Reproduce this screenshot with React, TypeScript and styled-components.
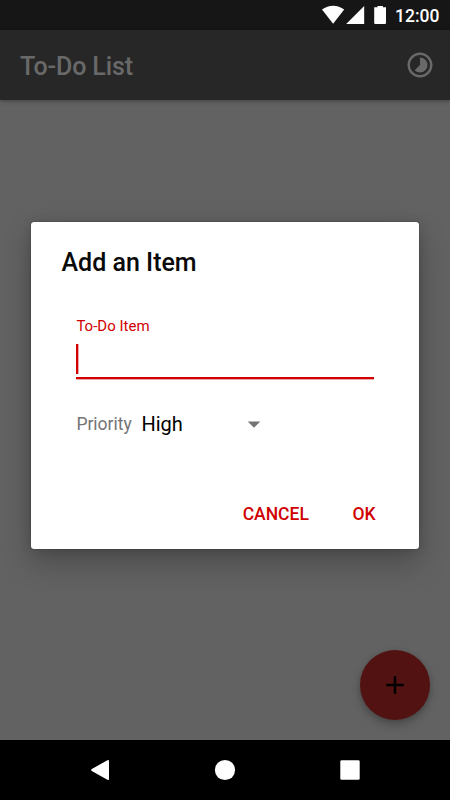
import React from "react";
import styled, { createGlobalStyle } from "styled-components";

const GlobalStyle = createGlobalStyle`
  *, *::before, *::after { box-sizing: border-box; }
  body { margin: 0; font-family: Roboto, sans-serif; background: #000; }
  button { font-family: inherit; border: 0; padding: 0; background: none; }
`;

const accent = "#d00000";

const Screen = styled.div`
  position: relative;
  display: flex;
  flex-direction: column;
  width: 450px;
  height: 800px;
  overflow: hidden;
  background: #626262;
`;

const StatusBar = styled.header`
  display: flex;
  align-items: center;
  justify-content: flex-end;
  height: 30px;
  padding: 1px 10px 0 0;
  background: #161616;
  color: #fff;
`;

const StatusIcons = styled.svg`
  width: 66px;
  height: 30px;
  margin: -1px 8px 0 0;
`;

const Clock = styled.span`
  width: 45px;
  font-size: 17.5px;
  font-weight: 500;
  line-height: 30px;
  white-space: nowrap;
`;

const Toolbar = styled.div`
  display: flex;
  align-items: center;
  justify-content: space-between;
  height: 70px;
  padding: 0 15px 0 20px;
  background: #272727;
  color: #696969;
  box-shadow: 0 1px 4px rgba(0, 0, 0, 0.35);
`;

const ToolbarTitle = styled.h1`
  margin: 3px 0 0;
  font-size: 25px;
  font-weight: 500;
  letter-spacing: -0.1px;
  line-height: 30px;
`;

const Icon = styled.svg`
  display: block;
  width: 30px;
  height: 30px;
  fill: currentColor;
`;

const Content = styled.main`
  display: flex;
  flex: 1;
  align-items: flex-end;
  justify-content: flex-end;
  padding: 20px;
`;

const Fab = styled.button`
  display: flex;
  align-items: center;
  justify-content: center;
  width: 70px;
  height: 70px;
  border-radius: 50%;
  background: #531212;
  color: #000;
  box-shadow: 0 5px 10px rgba(0, 0, 0, 0.22), 0 1px 5px rgba(0, 0, 0, 0.12);
`;

const NavBar = styled.nav`
  display: flex;
  align-items: center;
  justify-content: space-between;
  height: 60px;
  padding: 0 85px;
  background: #000;
  color: #fff;
`;

const Dialog = styled.section`
  position: absolute;
  top: 221.5px;
  left: 31px;
  display: flex;
  flex-direction: column;
  width: 388px;
  height: 327px;
  padding: 25px 28px 15px 30.5px;
  border-radius: 3px;
  background: #fff;
  box-shadow: 0 14px 30px rgba(0, 0, 0, 0.24), 0 1px 12px rgba(0, 0, 0, 0.14), 0 0 1px rgba(0, 0, 0, 0.8);
`;

const DialogTitle = styled.h2`
  margin: 0;
  color: #0a0a0a;
  font-size: 25px;
  font-weight: 500;
  line-height: 32px;
`;

const Form = styled.div`
  flex: 1;
  padding: 38.5px 17.5px 0 14.9px;
`;

const Field = styled.div`
  height: 62px;
  border-bottom: 2px solid ${accent};
  box-shadow: 0 1px 0 rgba(208, 0, 0, 0.35);
`;

const FieldLabel = styled.div`
  color: ${accent};
  font-size: 15px;
  line-height: 19px;
`;

const Caret = styled.div`
  width: 2px;
  height: 30px;
  margin-top: 8px;
  background: ${accent};
  box-shadow: 1px 0 0 rgba(208, 0, 0, 0.35);
`;

const PriorityRow = styled.div`
  display: flex;
  align-items: center;
  height: 40px;
  margin-top: 24.5px;
`;

const PriorityLabel = styled.span`
  width: 65px;
  color: #747474;
  font-size: 17.5px;
`;

const Select = styled.div`
  display: flex;
  align-items: center;
  justify-content: space-between;
  width: 127.5px;
  color: #000;
  font-size: 20px;
`;

const DropIcon = styled(Icon)`
  color: #747474;
`;

const Actions = styled.div`
  display: flex;
  align-items: center;
  justify-content: flex-end;
  gap: 43.5px;
  height: 40px;
  padding-right: 15.5px;
`;

const ActionButton = styled.button`
  color: ${accent};
  font-size: 17.5px;
  font-weight: 500;
  line-height: 24px;
`;

export default function App() {
  return (
    <>
      <GlobalStyle />
      <Screen>
        <StatusBar>
          <StatusIcons viewBox="321 0 66 30" fill="#fff">
            <path d="M322 9.6C328.5 4.5 337.7 4.5 344.2 9.6L333.1 23.8Z" />
            <path d="M364.2 6V24H346.2Z" />
            <path d="M377.5 6h5.5v1.3h3V23a1 1 0 0 1-1 1h-9.8a1 1 0 0 1-1-1V7.3h3.3Z" />
          </StatusIcons>
          <Clock>12:00</Clock>
        </StatusBar>
        <Toolbar>
          <ToolbarTitle>To-Do List</ToolbarTitle>
          <Icon viewBox="0 0 24 24">
            <path d="M16.24 7.76C15.07 6.59 13.54 6 12 6v6l-4.24 4.24c2.34 2.34 6.14 2.34 8.49 0 2.34-2.34 2.34-6.14-.01-8.48zM12 2C6.48 2 2 6.48 2 12s4.48 10 10 10 10-4.48 10-10S17.52 2 12 2zm0 18c-4.42 0-8-3.58-8-8s3.58-8 8-8 8 3.58 8 8-3.58 8-8 8z" />
          </Icon>
        </Toolbar>
        <Content>
          <Fab aria-label="Add">
            <Icon viewBox="0 0 24 24">
              <path d="M19 13h-6v6h-2v-6H5v-2h6V5h2v6h6v2z" />
            </Icon>
          </Fab>
        </Content>
        <NavBar>
          <Icon viewBox="0 0 30 30">
            <path d="M6.8 14.1 22.4 5.2Q24 4.5 24 6V24Q24 25.5 22.4 24.8L6.8 15.9Q5.4 15 6.8 14.1Z" />
          </Icon>
          <Icon viewBox="0 0 30 30">
            <circle cx="15" cy="15" r="10.1" />
          </Icon>
          <Icon viewBox="0 0 30 30">
            <rect x="5.3" y="5.3" width="19.4" height="19.4" rx="1.3" />
          </Icon>
        </NavBar>
        <Dialog role="dialog">
          <DialogTitle>Add an Item</DialogTitle>
          <Form>
            <Field>
              <FieldLabel>To-Do Item</FieldLabel>
              <Caret />
            </Field>
            <PriorityRow>
              <PriorityLabel>Priority</PriorityLabel>
              <Select>
                High
                <DropIcon viewBox="0 0 24 24">
                  <path d="M7 10l5 5 5-5z" />
                </DropIcon>
              </Select>
            </PriorityRow>
          </Form>
          <Actions>
            <ActionButton>CANCEL</ActionButton>
            <ActionButton>OK</ActionButton>
          </Actions>
        </Dialog>
      </Screen>
    </>
  );
}
